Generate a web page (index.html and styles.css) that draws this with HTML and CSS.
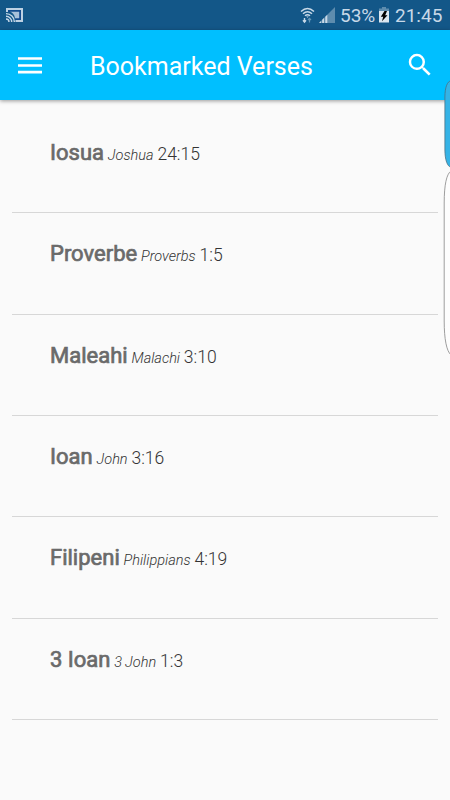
FILE: index.html
```
<!DOCTYPE html>
<html lang="ro">
<head>
    <meta charset="UTF-8">
    <meta name="viewport" content="width=device-width, initial-scale=1.0">
    <title>Bookmarked Verses</title>
    <link rel="stylesheet" href="styles.css">
</head>
<body>
    <div class="status-bar">
        <svg class="cast-icon" width="17" height="15" viewBox="0 0 17 15">
            <path d="M1 4V1h15v12H9.500" fill="none" stroke="#bdd1e3" stroke-width="2"/>
            <path d="M3 4V3h11v8H9" fill="none" stroke="#164493" stroke-width="1.200"/>
            <path d="M4 3.700h9.200v6.500H9C8.500 6.500 6.500 4.500 4 3.700z" fill="#a9c1d9"/>
            <path d="M0 5.600a8.400 8.400 0 0 1 8.400 8.400M0 8.300a5.700 5.700 0 0 1 5.700 5.700M0 11a3 3 0 0 1 3 3" fill="none" stroke="#c5d7e8" stroke-width="1.400"/>
        </svg>
        <svg class="wifi-icon" width="15" height="17" viewBox="0 0 15 17">
            <path d="M1 4.500Q7.500-1.500 14 4.500M3 6.800Q7.500 2.600 12 6.800M5 8.800Q7.500 6.600 10 8.800" fill="none" stroke="#c8d9e8" stroke-width="1.500"/>
            <path d="M6.200 9.500h2.600L7.500 10.800z" fill="#c8d9e8"/>
            <path d="M4.500 11v4M3 13.300l1.500 1.900L6 13.300" fill="none" stroke="#c8d9e8" stroke-width="1.400"/>
            <path d="M9.500 15.500v-4M8 13l1.500-1.700L11 13" fill="none" stroke="#6796b6" stroke-width="1.200"/>
        </svg>
        <svg class="signal-icon" width="16" height="16" viewBox="0 0 16 16">
            <path d="M0 16L16 0v16z" fill="#5d8cae"/>
            <path d="M0 16l2-2v2zM3.200 12.800l1.800-1.800v5H3.200zM6.300 9.700l2-2V16h-2z" fill="#c8d9e8"/>
        </svg>
        <span class="battery-level">53%</span>
        <svg class="battery-icon" width="10" height="16" viewBox="0 0 10 16">
            <path d="M3 0h4v1.500h3V5H0V1.500h3z" fill="#5d8cae"/>
            <path d="M0 4h10v11.500H0z" fill="#dce7f0"/>
            <path d="M5.500 4L1.800 9.800h2.400L3 14.200l5.500-6H6.200L8 4z" fill="#000"/>
        </svg>
        <span class="clock">21:45</span>
    </div>

    <div class="toolbar">
        <svg class="menu-icon" width="24" height="17" viewBox="0 0 24 17">
            <path d="M0 1.500h24M0 8.500h24M0 15.200h24" stroke="#fff" stroke-width="2.700"/>
        </svg>
        <h1>Bookmarked Verses</h1>
        <svg class="search-icon" width="30" height="30" viewBox="0 0 24 24">
            <path fill="#fff" d="M15.500 14h-.79l-.28-.27A6.471 6.471 0 0 0 16 9.500 6.500 6.500 0 1 0 9.500 16c1.610 0 3.090-.59 4.230-1.570l.27.28v.79l5 4.990L20.490 19l-4.990-5zm-6 0C7.010 14 5 11.990 5 9.500S7.010 5 9.500 5 14 7.010 14 9.500 11.990 14 9.500 14z"/>
        </svg>
    </div>

    <ul class="verses">
        <li><b>Iosua</b> <i>Joshua</i> <span>24:15</span></li>
        <li><b>Proverbe</b> <i>Proverbs</i> <span>1:5</span></li>
        <li><b>Maleahi</b> <i>Malachi</i> <span>3:10</span></li>
        <li><b>Ioan</b> <i>John</i> <span>3:16</span></li>
        <li><b>Filipeni</b> <i>Philippians</i> <span>4:19</span></li>
        <li><b>3 Ioan</b> <i>3 John</i> <span>1:3</span></li>
    </ul>

    <!-- edge panel handle, floats over the right side of the screen -->
    <svg class="edge-panel" width="7" height="276" viewBox="0 0 7 276">
        <path d="M8 1C4.500 1 1.900 7 1.900 17v53c0 10 2.600 17 6.100 17z" fill="#35b3e6" stroke="#4b7083" stroke-width=".8"/>
        <path d="M8 91C3.500 94 1.200 105 1.200 123v118c0 18 2.300 30 6.800 34" fill="#fdfdfd" stroke="#858585" stroke-width=".8"/>
    </svg>
</body>
</html>
```

FILE: styles.css
```
body {
    margin: 0;
    height: 800px;
    position: relative;
    overflow: hidden;
    background-color: #fafafa;
    font-family: Roboto, sans-serif;
}

.status-bar {
    display: flex;
    align-items: center;
    box-sizing: border-box;
    height: 30px;
    padding: 0 8px 0 6px;
    background-color: #135788;
    color: #c8d9e8;
    font-size: 19px;
    line-height: 30px;
}

.wifi-icon {
    margin-left: auto;
    margin-right: 4px;
}

.battery-level {
    width: 35px;
    margin: 2px 4px 0 6px;
}

.signal-icon {
    margin-right: -1px;
}

.battery-icon {
    margin-right: 6px;
}

.clock {
    width: 47px;
    margin-top: 2px;
}

.toolbar {
    display: flex;
    align-items: center;
    box-sizing: border-box;
    height: 70px;
    padding: 0 15px 0 18px;
    background-color: #00bfff;
    box-shadow: 0 1px 4px rgba(0, 0, 0, 0.4);
}

.toolbar h1 {
    flex: 1;
    margin: 3px 0 0 48px;
    color: #fff;
    font-size: 25px;
    font-weight: 400;
    white-space: nowrap;
}

.verses {
    margin: 12.200px 12px 0;
    padding: 0;
    list-style: none;
}

.verses li {
    box-sizing: border-box;
    height: 101.300px;
    padding: 27px 0 0 38px;
    border-bottom: 1px solid #d7d7d7;
    color: #555;
    font-size: 17.500px;
    line-height: 28px;
    white-space: nowrap;
    word-spacing: -0.5px;
}

.verses b {
    font-size: 22px;
    font-weight: 400;
    word-spacing: 0;
    -webkit-text-stroke: 0.7px #6a6a6a;
    color: #6a6a6a;
}

.verses i {
    font-size: 14.500px;
    font-weight: 300;
    color: #333;
}

.verses span {
    font-size: 17.500px;
    font-weight: 300;
    color: #333;
}

.edge-panel {
    position: absolute;
    top: 80px;
    right: 0;
}
```
